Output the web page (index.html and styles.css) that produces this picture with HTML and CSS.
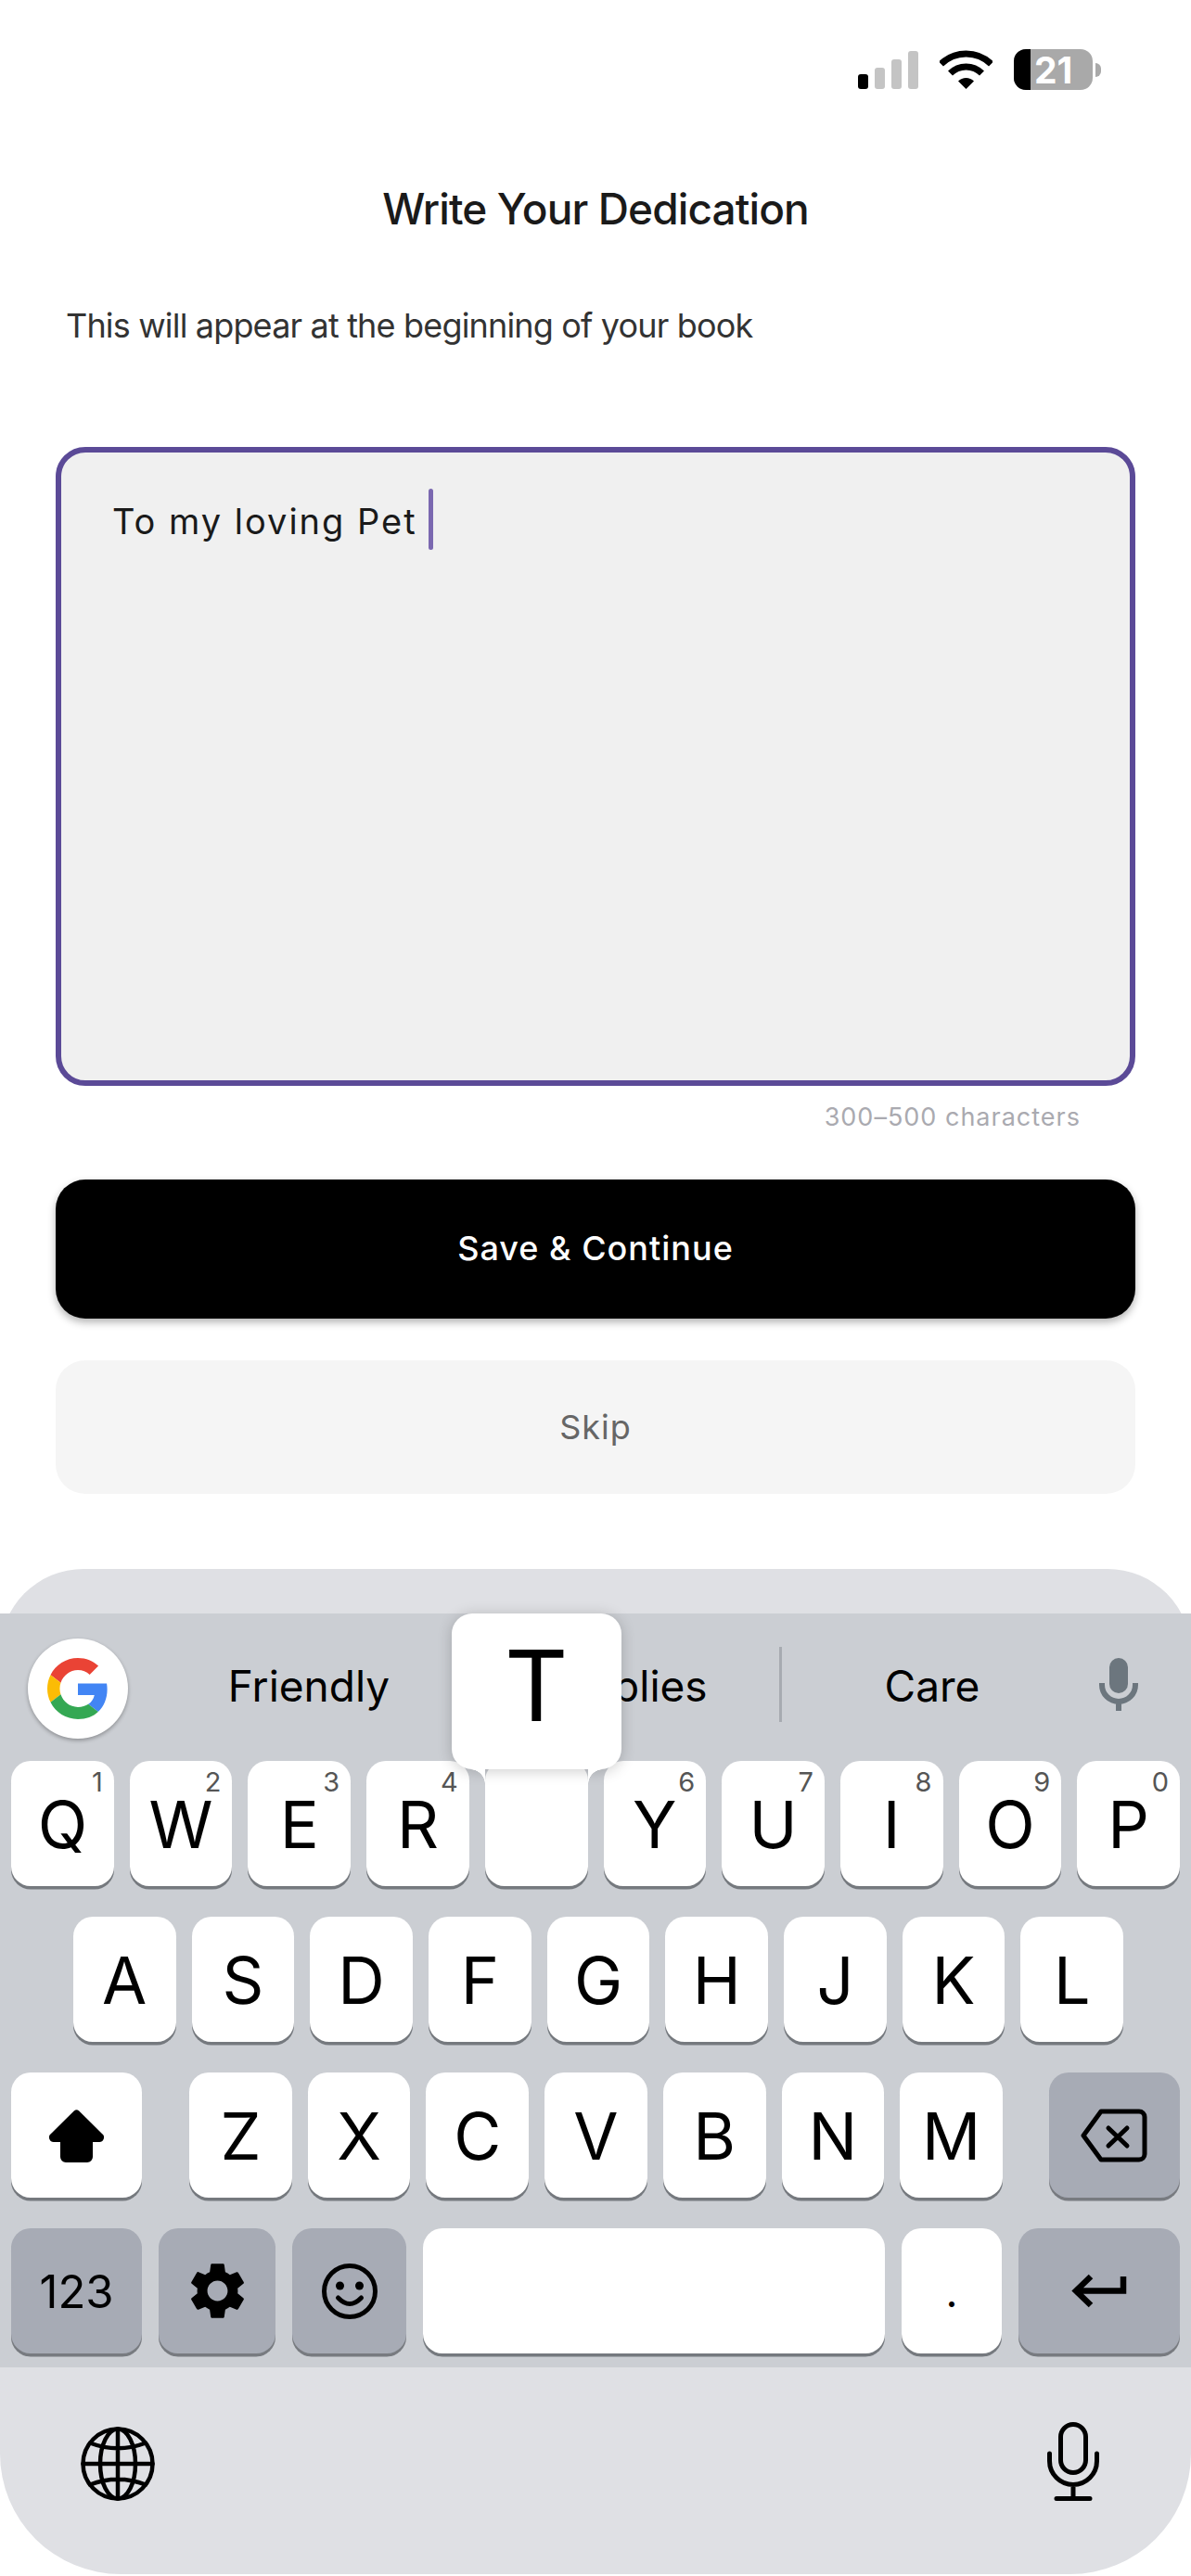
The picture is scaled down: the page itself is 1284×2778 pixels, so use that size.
FILE: index.html
```html
<!DOCTYPE html>
<html lang="en">
<head>
<meta charset="utf-8">
<title>Write Your Dedication</title>
<link rel="stylesheet" href="styles.css">
</head>
<body>
<div class="page">
  <div class="status">
    <svg class="signal" width="65" height="44" viewBox="0 0 65 44">
      <rect class="bar-on" x="0" y="27" width="11" height="16" rx="3"/>
      <rect class="bar-off" x="18" y="20" width="11" height="23" rx="3"/>
      <rect class="bar-off" x="36" y="11" width="11" height="32" rx="3"/>
      <rect class="bar-off" x="54" y="2" width="11" height="41" rx="3"/>
    </svg>
    <svg class="wifi" width="57" height="44" viewBox="0 0 57 44">
      <g transform="translate(0 1)">
        <path class="wifi-arc" d="M1.5 15A38.5 38.5 0 0 1 55.5 15"/>
        <path class="wifi-arc" d="M11.5 25A24 24 0 0 1 45.5 25"/>
        <path d="M28.5 42L20 33.5A12 12 0 0 1 37 33.5Z"/>
      </g>
    </svg>
    <div class="battery">
      <div class="battery-body">
        <span class="battery-fill"></span>
        <span class="battery-level">21</span>
      </div>
      <span class="battery-nub"></span>
    </div>
  </div>

  <h1 class="title">Write Your Dedication</h1>
  <p class="subtitle">This will appear at the beginning of your book</p>

  <div class="editor">
    <span class="editor-text">To my loving Pet</span>
    <span class="caret"></span>
  </div>
  <p class="counter">300–500 characters</p>

  <button class="btn btn-primary">Save &amp; Continue</button>
  <button class="btn btn-secondary">Skip</button>

  <div class="tray">
    <div class="keyboard">
      <div class="suggestions">
        <div class="g-badge">
          <svg width="66" height="66" viewBox="0 0 48 48">
            <path fill="#EA4335" d="M24 9.5c3.54 0 6.71 1.22 9.21 3.6l6.85-6.85C35.9 2.38 30.47 0 24 0 14.62 0 6.51 5.38 2.56 13.22l7.98 6.19C12.43 13.72 17.74 9.5 24 9.5z"/>
            <path fill="#4285F4" d="M46.98 24.55c0-1.57-.15-3.09-.38-4.55H24v9.02h12.94c-.58 2.96-2.26 5.48-4.78 7.18l7.73 6c4.51-4.18 7.09-10.36 7.09-17.65z"/>
            <path fill="#FBBC05" d="M10.53 28.59c-.48-1.45-.76-2.99-.76-4.59s.27-3.14.76-4.59l-7.98-6.19C.92 16.46 0 20.12 0 24c0 3.88.92 7.54 2.56 10.78l7.97-6.19z"/>
            <path fill="#34A853" d="M24 48c6.48 0 11.93-2.13 15.89-5.81l-7.73-6c-2.15 1.45-4.92 2.3-8.16 2.3-6.26 0-11.57-4.22-13.47-9.91l-7.98 6.19C6.51 42.62 14.62 48 24 48z"/>
          </svg>
        </div>
        <span class="word word-a">Friendly</span>
        <span class="word word-b">Replies</span>
        <span class="word-divider"></span>
        <span class="word word-c">Care</span>
        <svg class="voice" width="42" height="57" viewBox="0 0 42 57">
          <rect x="11" y="0" width="20" height="38" rx="10" fill="#6c767e"/>
          <path d="M3 27V29A18 18 0 0 0 39 29V27M21 47V57" fill="none" stroke="#6c767e" stroke-width="6"/>
        </svg>
      </div>

      <div class="row">
        <div class="key"><span class="hint">1</span>Q</div>
        <div class="key"><span class="hint">2</span>W</div>
        <div class="key"><span class="hint">3</span>E</div>
        <div class="key"><span class="hint">4</span>R</div>
        <div class="key">
          <div class="popup">T</div>
        </div>
        <div class="key"><span class="hint">6</span>Y</div>
        <div class="key"><span class="hint">7</span>U</div>
        <div class="key"><span class="hint">8</span>I</div>
        <div class="key"><span class="hint">9</span>O</div>
        <div class="key"><span class="hint">0</span>P</div>
      </div>

      <div class="row row-home">
        <div class="key">A</div>
        <div class="key">S</div>
        <div class="key">D</div>
        <div class="key">F</div>
        <div class="key">G</div>
        <div class="key">H</div>
        <div class="key">J</div>
        <div class="key">K</div>
        <div class="key">L</div>
      </div>

      <div class="row row-bottom">
        <div class="key key-shift">
          <svg width="59" height="57" viewBox="0 0 59 57">
            <path d="M27 1.2a4 4 0 0 1 5 0L57 26a5 5 0 0 1-3.5 9H47v16a6 6 0 0 1-6 6H18a6 6 0 0 1-6-6V35H5.5A5 5 0 0 1 2 26Z"/>
          </svg>
        </div>
        <div class="key">Z</div>
        <div class="key">X</div>
        <div class="key">C</div>
        <div class="key">V</div>
        <div class="key">B</div>
        <div class="key">N</div>
        <div class="key">M</div>
        <div class="key key-fn key-back">
          <svg width="72" height="58" viewBox="0 0 72 58">
            <path class="line" d="M22 3H63a6 6 0 0 1 6 6V49a6 6 0 0 1-6 6H22L3 29Z"/>
            <path class="line" d="M30 21L50 40M50 21L30 40"/>
          </svg>
        </div>
      </div>

      <div class="row row-actions">
        <div class="key key-fn key-num">123</div>
        <div class="key key-fn key-gear">
          <svg width="73" height="73" viewBox="0 0 24 24">
            <path d="M19.14 12.94c.04-.3.06-.61.06-.94 0-.32-.02-.64-.07-.94l2.03-1.58c.18-.14.23-.41.12-.61l-1.92-3.32c-.12-.22-.37-.29-.59-.22l-2.39.96c-.5-.38-1.03-.7-1.62-.94l-.36-2.54c-.04-.24-.24-.41-.48-.41h-3.84c-.24 0-.43.17-.47.41l-.36 2.54c-.59.24-1.13.57-1.62.94l-2.39-.96c-.22-.08-.47 0-.59.22L2.74 8.87c-.12.21-.08.47.12.61l2.03 1.58c-.05.3-.09.63-.09.94s.02.64.07.94l-2.03 1.58c-.18.14-.23.41-.12.61l1.92 3.32c.12.22.37.29.59.22l2.39-.96c.5.38 1.03.7 1.62.94l.36 2.54c.05.24.24.41.48.41h3.84c.24 0 .44-.17.47-.41l.36-2.54c.59-.24 1.13-.56 1.62-.94l2.39.96c.22.08.47 0 .59-.22l1.92-3.32c.12-.22.07-.47-.12-.61l-2.01-1.58zM12 15.6c-1.98 0-3.6-1.62-3.6-3.6s1.62-3.6 3.6-3.6 3.6 1.62 3.6 3.6-1.62 3.6-3.6 3.6z"/>
          </svg>
        </div>
        <div class="key key-fn key-emoji">
          <svg width="60" height="60" viewBox="0 0 60 60">
            <circle class="line" cx="30" cy="30" r="27.5"/>
            <circle cx="19.5" cy="24" r="4.5"/>
            <circle cx="40.5" cy="24" r="4.5"/>
            <path class="line" d="M17.5 37Q30 50 42.5 37"/>
          </svg>
        </div>
        <div class="key key-space"></div>
        <div class="key key-period">.</div>
        <div class="key key-fn key-return">
          <svg width="60" height="38" viewBox="0 0 60 38">
            <path class="line line-heavy" d="M56 3V18.500H6M21 3L5 18.500L21 34"/>
          </svg>
        </div>
      </div>
    </div>

    <div class="tray-foot">
      <svg width="80" height="80" viewBox="0 0 80 80">
        <g class="line line-thin">
          <circle cx="40" cy="40" r="37.500"/>
          <ellipse cx="40" cy="40" rx="19" ry="37.500"/>
          <path d="M40 2.500V77.500M2.500 40H77.500M10 17.500Q40 29 70 17.500M10 62.500Q40 51 70 62.500"/>
        </g>
      </svg>
      <svg width="56" height="85" viewBox="0 0 56 85">
        <g class="line line-mic">
          <rect x="14.500" y="2.500" width="27" height="52" rx="13.500"/>
          <path d="M2.500 34V42A25.500 25.500 0 0 0 53.500 42V34M28 68V82M10 82.500H46"/>
        </g>
      </svg>
    </div>
  </div>
</div>
</body>
</html>
```

FILE: styles.css
```css
* {
  box-sizing: border-box;
}

html,
body {
  margin: 0;
  background: #fff;
}

.page {
  width: 1284px;
  height: 2778px;
  overflow: hidden;
  font-family: Inter, "Liberation Sans", sans-serif;
  color: #1a1a1a;
}

/* Status bar */
.status {
  height: 195px;
  padding: 53px 97px 0 0;
  display: flex;
  justify-content: flex-end;
  align-items: flex-start;
  gap: 23px;
}

.bar-on {
  fill: #000;
}

.bar-off {
  fill: #c4c4c4;
}

.wifi-arc {
  fill: none;
  stroke: #000;
  stroke-width: 7;
}

.battery {
  display: flex;
  align-items: center;
  gap: 3px;
}

.battery-body {
  width: 85px;
  height: 44px;
  border-radius: 13px;
  overflow: hidden;
  background: #a9a9a9;
  display: flex;
  align-items: center;
}

.battery-fill {
  width: 18px;
  height: 100%;
  background: #000;
}

.battery-level {
  padding-left: 4px;
  font-size: 39px;
  font-weight: 700;
  line-height: 1;
  color: #fff;
}

.battery-nub {
  width: 6px;
  height: 15px;
  background: #a9a9a9;
  border-radius: 0 8px 8px 0;
}

/* Heading */
.title {
  margin: 0;
  height: 60px;
  font-size: 46px;
  line-height: 60px;
  font-weight: 500;
  text-align: center;
  letter-spacing: -0.9px;
}

.subtitle {
  margin: 71px 0 0;
  padding-left: 71px;
  font-size: 36px;
  line-height: 50px;
  color: #333;
  letter-spacing: -0.83px;
}

/* Dedication field */
.editor {
  margin: 106px 60px 0;
  height: 689px;
  padding: 39px 0 0 55px;
  background: #f0f0f0;
  border: 6px solid #5b4a97;
  border-radius: 32px;
  display: flex;
  align-items: flex-start;
}

.editor-text {
  padding-top: 2px;
  font-size: 38px;
  line-height: 66px;
  letter-spacing: 2px;
}

.caret {
  width: 5px;
  height: 66px;
  margin-left: 12px;
  border-radius: 3px;
  background: #7b68b0;
}

.counter {
  margin: 14px 0 0;
  padding-right: 119px;
  text-align: right;
  font-size: 27px;
  line-height: 40px;
  letter-spacing: 1px;
  color: #aaaab0;
}

/* Action buttons */
.btn {
  display: block;
  width: 1164px;
  margin: 0 60px;
  border: 0;
  border-radius: 32px;
  font-family: inherit;
  font-size: 36px;
  letter-spacing: 1px;
}

.btn-primary {
  margin-top: 47px;
  height: 150px;
  padding-bottom: 3px;
  background: #000;
  color: #fff;
  font-weight: 500;
  box-shadow: 0 4px 8px rgba(0, 0, 0, 0.3);
}

.btn-secondary {
  margin-top: 45px;
  height: 144px;
  background: #f5f5f5;
  color: #666;
}

/* Keyboard */
.tray {
  margin-top: 81px;
  height: 1084px;
  background: #dfe0e4;
  border-radius: 90px 90px 130px 130px;
  padding-top: 48px;
}

.keyboard {
  height: 813px;
  background: #cbced3;
}

.suggestions {
  height: 159px;
  padding: 27px 57px 0 30px;
  display: flex;
  align-items: flex-start;
}

.g-badge {
  width: 108px;
  height: 108px;
  border-radius: 50%;
  background: #fff;
  box-shadow: 0 2px 4px rgba(0, 0, 0, 0.3);
  display: flex;
  align-items: center;
  justify-content: center;
}

.word {
  height: 108px;
  font-size: 46px;
  line-height: 102px;
  text-align: center;
  color: #000;
}

.word-a {
  width: 390px;
}

.word-b {
  width: 312px;
}

.word-divider {
  width: 2.500px;
  height: 81px;
  margin-top: 9px;
  background: #a7abb1;
}

.word-c {
  width: 325px;
}

.voice {
  margin: 21px 0 0 17px;
}

.row {
  display: flex;
  justify-content: center;
  gap: 17px;
  padding: 0 12px;
  margin-bottom: 33px;
}

.row-home {
  padding: 0 9px 0 15px;
}

.key {
  position: relative;
  flex: 0 0 110.700px;
  height: 135px;
  padding-top: 2px;
  background: #fff;
  border-radius: 21px;
  box-shadow: 0 3.500px 0 #75797e;
  display: flex;
  align-items: center;
  justify-content: center;
  font-size: 70px;
  line-height: 52px;
  color: #000;
}

.hint {
  position: absolute;
  top: 8px;
  right: 12px;
  font-size: 29px;
  line-height: 1;
  color: #555;
}

.popup {
  position: absolute;
  left: -36px;
  top: -159px;
  width: 183px;
  height: 168px;
  padding-top: 25px;
  background: #fff;
  border-radius: 22px;
  box-shadow: 0 2px 16px rgba(0, 0, 0, 0.2);
  text-align: center;
  font-size: 106px;
  line-height: 106px;
  z-index: 2;
}

.popup::before,
.popup::after {
  content: "";
  position: absolute;
  top: 168px;
  width: 16px;
  height: 16px;
}

.popup::before {
  left: 20px;
  background: radial-gradient(circle at 0 100%, transparent 15.500px, #fff 16px);
}

.popup::after {
  right: 20px;
  background: radial-gradient(circle at 100% 100%, transparent 15.500px, #fff 16px);
}

.row-bottom .key-shift,
.row-bottom .key-back {
  flex-basis: 141px;
}

.key-shift {
  margin-right: 34px;
}

.key-back {
  margin-left: 33px;
}

.key-fn {
  padding-top: 0;
  background: #a7abb5;
  box-shadow: 0 3.500px 0 #787b80;
}

.row-actions {
  gap: 18px;
  margin-bottom: 0;
}

.row-actions .key-num {
  flex-basis: 141px;
  padding-top: 2px;
  font-size: 49px;
}

.row-actions .key-gear {
  flex-basis: 126px;
}

.row-actions .key-emoji {
  flex-basis: 123px;
}

.row-actions .key-space {
  flex-basis: 498px;
}

.row-actions .key-period {
  flex-basis: 108px;
  padding-bottom: 44px;
  font-size: 45px;
  align-items: flex-end;
  line-height: 45px;
}

.row-actions .key-return {
  flex-basis: 174px;
}

.line {
  fill: none;
  stroke: #000;
  stroke-width: 5;
  stroke-linejoin: round;
  stroke-linecap: round;
}

.line-heavy {
  stroke-width: 6.500px;
  stroke-linejoin: miter;
  stroke-linecap: butt;
}

.line-thin {
  stroke-width: 4.500px;
}

.line-mic {
  stroke-width: 5px;
}

.tray-foot {
  display: flex;
  justify-content: space-between;
  align-items: flex-end;
  padding: 59px 99px 0 87px;
}
```
